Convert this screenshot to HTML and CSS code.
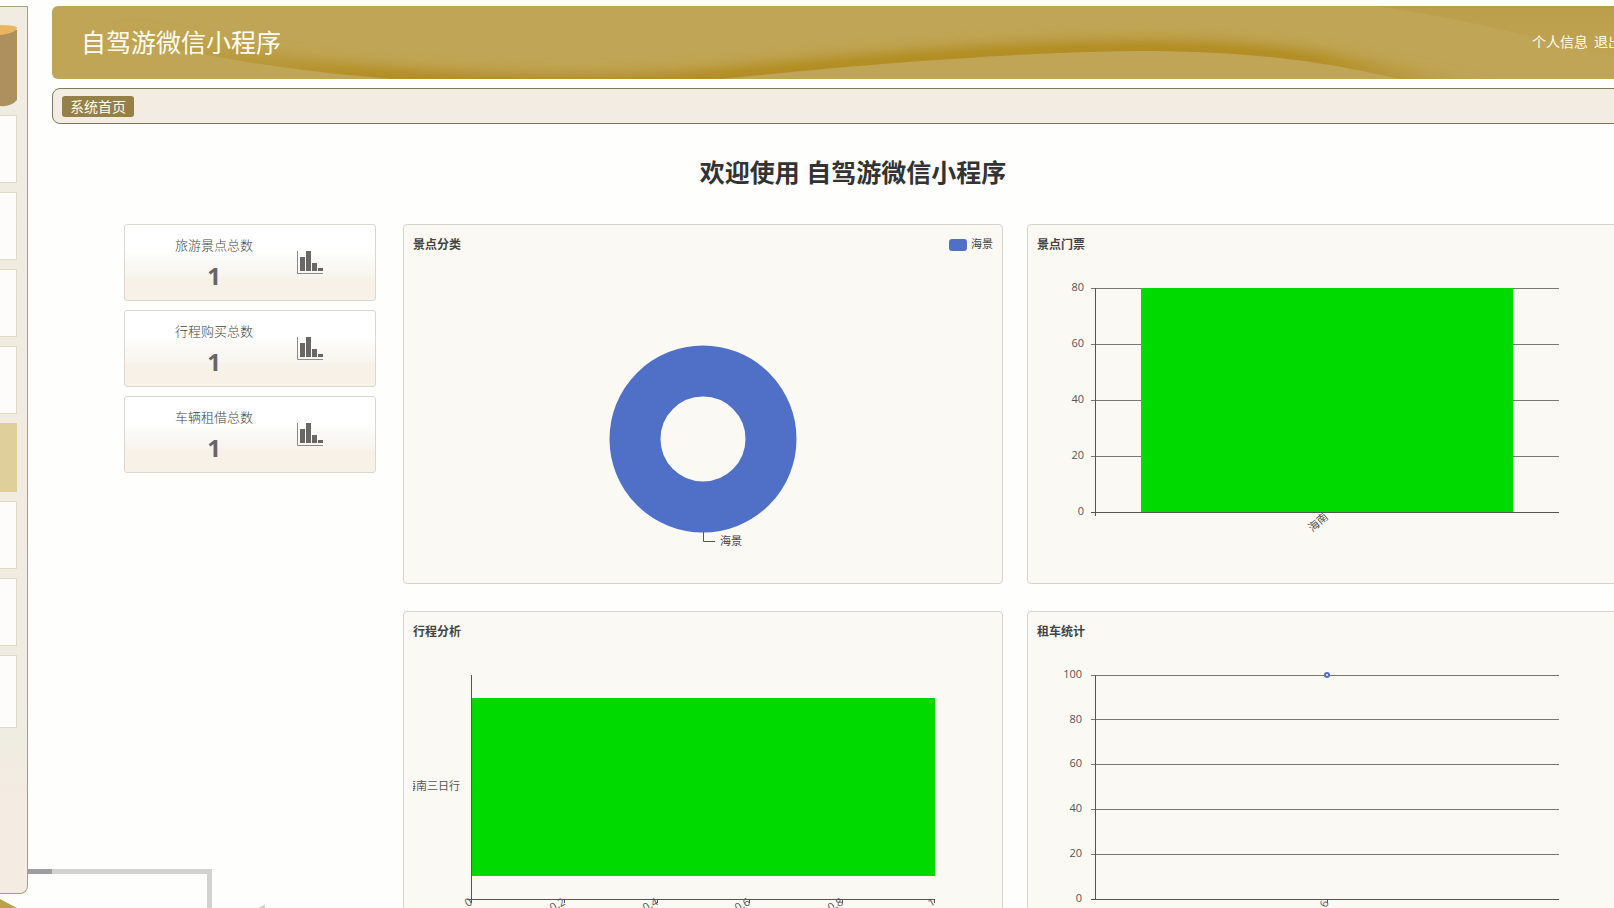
FILE: index.html
```html
<!DOCTYPE html>
<html lang="zh-CN">
<head>
<meta charset="utf-8">
<meta name="viewport" content="width=device-width, initial-scale=1">
<title>自驾游微信小程序</title>
<link rel="stylesheet" href="styles.css">
</head>
<body>
<div class="page">
  <svg class="decor" viewBox="0 0 280 40" aria-hidden="true">
    <path d="M0 31 L17 40 H0Z" fill="#bda04a"/>
    <path d="M28 3.500H52" stroke="#9d9ea1" stroke-width="5"/>
    <path d="M52 3.500H209.500V40" stroke="#d2d2d3" stroke-width="5" fill="none"/>
    <path d="M258 40L265 36.500V40Z" fill="#d2d2d3"/>
  </svg>

  <aside class="sidebar">
    <svg class="sidebar-logo" viewBox="0 0 17 82" aria-hidden="true">
      <path d="M0 5H17V75Q11 82 0 81Z" fill="#ad905d"/>
      <path d="M0 0Q17 0 17 3Q16 8 0 10Z" fill="#e9b65d"/>
    </svg>
    <nav class="menu">
      <span class="menu-item"></span>
      <span class="menu-item"></span>
      <span class="menu-item"></span>
      <span class="menu-item"></span>
      <span class="menu-item active"></span>
      <span class="menu-item"></span>
      <span class="menu-item"></span>
      <span class="menu-item"></span>
    </nav>
  </aside>

  <main class="main">
    <header class="header">
      <svg class="header-wave" viewBox="0 0 1602 73" preserveAspectRatio="none" aria-hidden="true">
        <defs>
          <clipPath id="above"><path d="M60 30C180 56 260 68 370 75C520 84 600 80 670 73C850 54 1000 45 1100 45C1220 46 1290 60 1347 73L1450 94V-40H60Z"/></clipPath>
          <filter id="soft" x="-5%" y="-80%" width="110%" height="260%"><feGaussianBlur stdDeviation="7"/></filter>
          <linearGradient id="fade" gradientUnits="userSpaceOnUse" x1="60" y1="0" x2="1450" y2="0">
            <stop offset="0" stop-color="#b18b1b" stop-opacity="0"/>
            <stop offset=".2" stop-color="#b18b1b"/>
            <stop offset=".85" stop-color="#b18b1b"/>
            <stop offset="1" stop-color="#b18b1b" stop-opacity="0"/>
          </linearGradient>
          <linearGradient id="corner" x1="0" y1="0" x2="0" y2="1">
            <stop offset="0" stop-color="#b39337" stop-opacity=".35"/>
            <stop offset="1" stop-color="#b39337" stop-opacity=".05"/>
          </linearGradient>
        </defs>
        <path d="M1320 0C1420 12 1490 36 1602 60V0Z" fill="url(#corner)"/>
        <g clip-path="url(#above)">
          <path d="M60 30C180 56 260 68 370 75C520 84 600 80 670 73C850 54 1000 45 1100 45C1220 46 1290 60 1347 73L1450 94" fill="none" stroke="url(#fade)" stroke-width="22" filter="url(#soft)"/>
        </g>
      </svg>
      <h1 class="brand">自驾游微信小程序</h1>
      <div class="user-links">
        <a href="#">个人信息</a>
        <a href="#">退出</a>
      </div>
    </header>

    <nav class="tabs"><a class="tab" href="#">系统首页</a></nav>

    <h2 class="welcome">欢迎使用 自驾游微信小程序</h2>

    <section class="dashboard">
      <div class="stats">
        <article class="stat">
          <div class="stat-text"><span class="stat-label">旅游景点总数</span><strong class="stat-value">1</strong></div>
          <svg class="stat-icon" viewBox="0 0 26 25" aria-hidden="true"><path d="M.5 1V23.500H26" fill="none" stroke="#8c8a88"/><path d="M3 7h5v14H3zM9 1h5v20H9zM15 13h5v8h-5zM21 18h5v3h-5z" fill="#686765"/></svg>
        </article>
        <article class="stat">
          <div class="stat-text"><span class="stat-label">行程购买总数</span><strong class="stat-value">1</strong></div>
          <svg class="stat-icon" viewBox="0 0 26 25" aria-hidden="true"><path d="M.5 1V23.500H26" fill="none" stroke="#8c8a88"/><path d="M3 7h5v14H3zM9 1h5v20H9zM15 13h5v8h-5zM21 18h5v3h-5z" fill="#686765"/></svg>
        </article>
        <article class="stat">
          <div class="stat-text"><span class="stat-label">车辆租借总数</span><strong class="stat-value">1</strong></div>
          <svg class="stat-icon" viewBox="0 0 26 25" aria-hidden="true"><path d="M.5 1V23.500H26" fill="none" stroke="#8c8a88"/><path d="M3 7h5v14H3zM9 1h5v20H9zM15 13h5v8h-5zM21 18h5v3h-5z" fill="#686765"/></svg>
        </article>
      </div>

      <div class="charts">
        <article class="card">
          <svg class="chart" viewBox="0 0 580 340">
            <text class="chart-title" x="0" y="15">景点分类</text>
            <rect x="536" y="5" width="18" height="12" rx="3" fill="#5070c8"/>
            <text class="label dark" x="558" y="14">海景</text>
            <circle cx="290" cy="205" r="68" fill="none" stroke="#5070c8" stroke-width="51"/>
            <path class="axis" d="M290.500 298V307.500H302"/>
            <text class="label dark" x="307" y="311">海景</text>
          </svg>
        </article>

        <article class="card">
          <svg class="chart" viewBox="0 0 580 340">
            <text class="chart-title" x="0" y="15">景点门票</text>
            <path class="gridline" d="M54 54.500H522M54 110.500H522M54 166.500H522M54 222.500H522"/>
            <rect x="104" y="54" width="372" height="224" fill="#00da00"/>
            <path class="axis" d="M58.500 54V282M54 278.500H522"/>
            <g class="label end">
              <text x="47" y="57">80</text><text x="47" y="113">60</text><text x="47" y="169">40</text><text x="47" y="225">20</text><text x="47" y="281">0</text>
            </g>
            <text class="label end" transform="translate(292 284) rotate(-40)">海南</text>
          </svg>
        </article>

        <article class="card">
          <svg class="chart" viewBox="0 0 580 340">
            <text class="chart-title" x="0" y="15">行程分析</text>
            <rect x="58" y="77" width="464" height="178" fill="#00da00"/>
            <path class="axis" d="M58.500 54V282M54 278.500H522M151.500 278V282M244.500 278V282M336.500 278V282M429.500 278V282M521.500 278V282"/>
            <text class="label end" x="47" y="169">海南三日行</text>
            <g class="label end">
              <text transform="translate(60 283) rotate(-30)">0</text>
              <text transform="translate(153 283) rotate(-30)">0.2</text>
              <text transform="translate(246 283) rotate(-30)">0.4</text>
              <text transform="translate(338 283) rotate(-30)">0.6</text>
              <text transform="translate(431 283) rotate(-30)">0.8</text>
              <text transform="translate(523 283) rotate(-30)">1</text>
            </g>
          </svg>
        </article>

        <article class="card">
          <svg class="chart" viewBox="0 0 580 340">
            <text class="chart-title" x="0" y="15">租车统计</text>
            <path class="gridline" d="M54 54.500H522M54 98.500H522M54 143.500H522M54 188.500H522M54 233.500H522"/>
            <path class="axis" d="M58.500 54V278M54 278.500H522M290.500 278V282"/>
            <circle cx="290" cy="54" r="2" fill="#fff" stroke="#5070c8" stroke-width="2"/>
            <g class="label end">
              <text x="45" y="57">100</text><text x="45" y="102">80</text><text x="45" y="146">60</text><text x="45" y="191">40</text><text x="45" y="236">20</text><text x="45" y="281">0</text>
            </g>
            <text class="label end" transform="translate(292 281) rotate(-70)">6</text>
          </svg>
        </article>
      </div>
    </section>
  </main>
</div>
</body>
</html>
```

FILE: styles.css
```css
* {
  box-sizing: border-box;
}

body {
  margin: 0;
  background: #fefefd;
  color: #333;
  font-family: "Open Sans", "Noto Sans CJK SC", sans-serif;
}

a {
  color: inherit;
  text-decoration: none;
}

.page {
  position: relative;
  display: flex;
  gap: 24px;
  height: 100vh;
  overflow: hidden;
}

.decor {
  position: absolute;
  left: 0;
  bottom: 0;
  width: 280px;
  height: 40px;
}

.sidebar {
  position: relative;
  flex: none;
  width: 28px;
  margin: 6px 0 14px;
  padding: 18px 10px 0 0;
  border: 1px solid #a9a078;
  border-left: 0;
  border-radius: 0 0 8px 0;
  background: linear-gradient(#f0ece2, #f1ebe1 60%, #efece1 82%, #f4ebe2 90%);
}

.sidebar-logo {
  display: block;
  width: 17px;
  height: 82px;
}

.menu {
  display: grid;
  gap: 9px;
  margin-top: 8px;
}

.menu-item {
  height: 68px;
  border: 1px solid #dedbc2;
  border-left: 0;
  background: #fdfcfa;
}

.menu-item:last-child {
  height: 73px;
}

.menu-item.active {
  height: 69px;
  border: 0;
  background: #dfcf9a;
}

.main {
  flex: 1;
  min-width: 0;
  margin: 6px -40px 0 0;
}

.header {
  position: relative;
  display: flex;
  align-items: center;
  justify-content: space-between;
  height: 73px;
  padding: 0 32px 4px 29px;
  overflow: hidden;
  border-radius: 6px;
  background: #c0a556;
  color: #fffdf2;
}

.header-wave {
  position: absolute;
  inset: 0;
  width: 100%;
  height: 100%;
}

.brand {
  position: relative;
  margin: 0;
  font-size: 25px;
  font-weight: 400;
}

.user-links {
  position: relative;
  display: flex;
  gap: 6px;
  font-size: 14px;
}

.tabs {
  display: flex;
  align-items: center;
  height: 36px;
  margin-top: 9px;
  padding: 0 9px;
  border: 1px solid #7d7b5c;
  border-radius: 8px;
  background: #f3ece2;
}

.tab {
  padding: 0 8px;
  border-radius: 3px;
  background: #958047;
  color: #fffdf2;
  font-size: 14px;
  line-height: 21px;
}

.welcome {
  margin: 28px 0 32px;
  color: #333;
  font-size: 25px;
  font-weight: 700;
  line-height: 40px;
  text-align: center;
}

.dashboard {
  display: grid;
  grid-template-columns: 252px 1fr;
  align-items: start;
  gap: 27px;
  padding: 0 27px 0 72px;
}

.stats {
  display: grid;
  gap: 9px;
}

.stat {
  display: flex;
  align-items: center;
  gap: 44px;
  height: 77px;
  padding-left: 50px;
  border: 1px solid #d9d8d0;
  border-radius: 3px;
  background: linear-gradient(#fff 35%, #fafaf7 45%, #f8f6f0 66%, #f8f1e7 72%, #f8f1e7);
}

.stat-text {
  display: grid;
  justify-items: center;
  padding-top: 2px;
  color: #666;
}

.stat-label {
  color: #444;
  font-size: 13px;
  font-weight: 300;
  line-height: 24px;
}

.stat-value {
  font-size: 24px;
  line-height: 38px;
}

.stat-icon {
  width: 26px;
  height: 25px;
}

.charts {
  display: grid;
  grid-template-columns: 1fr 1fr;
  gap: 27px 24px;
}

.card {
  padding: 9px;
  border: 1px solid #d6d5cd;
  border-radius: 4px;
  background: #faf9f4;
}

.chart {
  display: block;
  width: 100%;
  overflow: hidden;
}

.chart-title {
  fill: #444;
  font-size: 12px;
  font-weight: 700;
}

.label {
  fill: #555;
  font-size: 11px;
}

.dark {
  fill: #444;
}

.end {
  text-anchor: end;
}

.axis {
  fill: none;
  stroke: #555;
}

.gridline {
  stroke: #777;
}
```
